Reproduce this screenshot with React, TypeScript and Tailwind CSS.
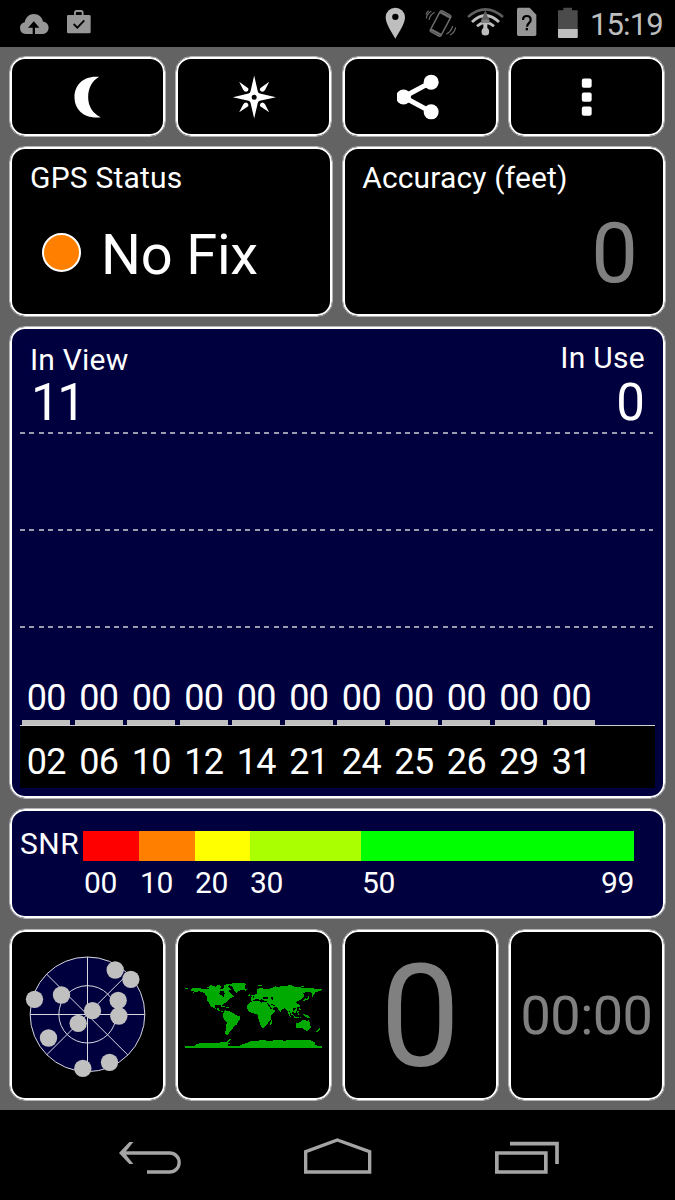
import type { ReactNode } from "react";

const satellites = ["02", "06", "10", "12", "14", "21", "24", "25", "26", "29", "31"];

const skyDots = [
  [316, 135], [363, 163], [325, 226], [327, 273], [248, 257], [205, 295],
  [155, 210], [74, 223], [116, 339], [219, 430], [299, 412],
];

// thin soft edge outside, 2px solid white line inside it
function Card({ className = "", children }: { className?: string; children: ReactNode }) {
  return (
    <div
      className={`min-w-0 overflow-hidden rounded-[16px] border border-[#b4b4b4] shadow-[inset_0_0_0_2px_#fff] ${className}`}
    >
      {children}
    </div>
  );
}

function StatusBar() {
  return (
    <header className="flex h-[47px] items-start bg-black pt-[7px] pl-[19px] text-[#bebebe]">
      <svg className="h-[33px] w-[30px]" viewBox="57 21 90 99" fill="#969696">
        <path d="M77 102a18 18 0 0 1-3-35.500C77 52 88 42 101.500 42c14 0 25 9 27.500 22.500A18.800 18.800 0 0 1 125 102h-20V83h13L101.500 64 84 83h14v19z" />
      </svg>
      <svg className="ml-[18px] h-[33px] w-[24px]" viewBox="201 21 72 99">
        <path d="M225 46v-8q0-5 5-5h13q5 0 5 5v8" fill="none" stroke="#969696" strokeWidth="5.500" />
        <rect x="201" y="45" width="71" height="55" rx="4" fill="#969696" />
        <path d="M221 72l11 11 21-22" fill="none" stroke="#000" strokeWidth="5.500" />
      </svg>
      <div className="ml-[294px] flex items-start">
        <svg className="h-[33px] w-[20px]" viewBox="150 21 60 99">
          <path fillRule="evenodd" d="M181 23a29 29 0 0 0-29 29c0 19 17 43 29 64 12-21 29-45 29-64a29 29 0 0 0-29-29zm0 18a9.500 9.500 0 1 1 0 19 9.500 9.500 0 0 1 0-19z" fill="#bebebe" />
        </svg>
        <svg className="ml-[20px] h-[33px] w-[31px]" viewBox="270 21 93 99" fill="none" stroke="#6b6b6b" strokeWidth="3.500">
          <g transform="rotate(28 317 70)">
            <rect x="299" y="35" width="36" height="71" rx="5" strokeWidth="4.500" />
            <path d="M299 41h36M299 100h36" strokeWidth="7" />
          </g>
          <path d="M289 34q-13 7-15 21M299 37q-14 7-17 23M345 105q14-7 17-23M334 102q14-6 19-24M281 32q-7 5-8 12" />
        </svg>
        <svg className="ml-[11px] h-[33px] w-[37px]" viewBox="395 21 111 99" fill="none">
          <path d="M398 51q52-46 105 0" stroke="#5f5f5f" strokeWidth="7.500" />
          <path d="M450 31l14 31h-28z" fill="#5f5f5f" />
          <path d="M410 66q40-39 81 0" stroke="#bebebe" strokeWidth="8" />
          <path d="M450 33l9 22h-18z" fill="#5f5f5f" />
          <path d="M425 79q25-23 51 0" stroke="#bebebe" strokeWidth="8" />
          <path d="M440 59h20l4 10h-28z" fill="#808080" />
          <path d="M444 72h12v16h-12z" fill="#bebebe" />
          <circle cx="450" cy="95" r="11.500" fill="#bebebe" />
        </svg>
        <svg className="ml-[13px] h-[33px] w-[20px]" viewBox="546 21 60 99">
          <path d="M551 23h33l20 21v59q0 5-5 5h-48q-5 0-5-5V28q0-5 5-5z" fill="#969696" />
          <path d="M564 60c0-16 23-16 23 0 0 9-11 10-11 20" fill="none" stroke="#000" strokeWidth="6.500" />
          <rect x="572" y="84" width="7" height="7" fill="#000" />
        </svg>
        <svg className="ml-[21px] h-[33px] w-[20px]" viewBox="669 21 60 99">
          <path d="M685 23h26v8h17v80q0 3-3 3h-53q-3 0-3-3V31h16z" fill="#4b4b4b" />
          <path d="M669 87h59v24q0 3-3 3h-53q-3 0-3-3z" fill="#bebebe" />
        </svg>
        <span className="ml-[12px] pt-[2px] text-[31px] leading-none tracking-[-0.900px]">15:19</span>
      </div>
    </header>
  );
}

function Toolbar() {
  return (
    <div className="mr-px grid h-[81px] grid-cols-4 gap-x-[9.330px]">
      <Card className="flex items-center justify-center bg-black">
        <svg className="size-[44px]" viewBox="196.500 223.500 132 132" fill="#fff">
          <path d="M296 229C250 224 222 252 222 290s30 66 79 60c-24-11-38-33-38-60s12-49 33-61z" />
        </svg>
      </Card>
      <Card className="flex items-center justify-center bg-black">
        <svg className="size-[44px]" viewBox="695.500 223.500 132 132" fill="#fff">
          <path fillRule="evenodd" d="M762 225l11 48 2 4 4 2 49 11-49 11-4 2-2 4-11 47-11-47-2-4-4-2-47-11 47-11 4-2 2-4zm0 57.500a7.500 7.500 0 1 0 0 15 7.500 7.500 0 0 0 0-15z" />
          <path d="M717 244l27 19q3 8-6 11-6 0-9-6zM807 244l-27 19q-3 8 6 11 6 0 9-6zM717 335l27-18q3-8-6-11-6 0-9 6zM807 335l-27-18q-3-8 6-11 6 0 9 6z" />
        </svg>
      </Card>
      <Card className="flex items-center justify-center bg-black">
        <svg className="size-[46px]" viewBox="187.500 220.500 138 138" fill="#fff">
          <path d="M290 245l-83 44.500 83 44.500" fill="none" stroke="#fff" strokeWidth="15" />
          <circle cx="290" cy="245" r="22.500" />
          <circle cx="207" cy="289.500" r="22.500" />
          <circle cx="290" cy="334" r="22.500" />
        </svg>
      </Card>
      <Card className="flex items-center justify-center bg-black">
        <svg className="size-[44px]" viewBox="687.500 223.500 132 132" fill="#fff">
          <rect x="741" y="234" width="29.500" height="28" rx="6" />
          <rect x="741" y="276" width="29.500" height="28" rx="6" />
          <rect x="741" y="318" width="29.500" height="28" rx="6" />
        </svg>
      </Card>
    </div>
  );
}

function DashedLine() {
  return (
    <div className="mr-[2px] h-[2px] shrink-0 bg-[repeating-linear-gradient(to_right,#9c9cb0_0px,#9c9cb0_5px,transparent_5px,transparent_9.390px)]" />
  );
}

function SignalPanel() {
  return (
    <Card className="mt-[9px] flex h-[473px] flex-col bg-[#00003f] pt-[2px] pr-[10px] pl-[10px]">
      <div className="flex h-[103px] shrink-0 justify-between px-[10px]">
        <div className="pt-[16px]">
          <div className="text-[30px] leading-none tracking-[0.200px]">In View</div>
          <div className="mt-[2px] pl-px text-[51px] leading-none tracking-[-2.500px]">11</div>
        </div>
        <div className="pt-[14px] text-right">
          <div className="text-[30px] leading-none tracking-[0.300px]">In Use</div>
          <div className="mt-[4px] text-[51px] leading-none">0</div>
        </div>
      </div>
      <DashedLine />
      <div className="h-[95px] shrink-0" />
      <DashedLine />
      <div className="h-[95px] shrink-0" />
      <DashedLine />
      <div className="flex h-[97px] shrink-0 gap-[4.530px] pl-[2.300px]">
        {satellites.map((id) => (
          <div key={id} className="flex w-[48px] flex-col items-center justify-end">
            <div className="mb-[4px] text-[36px] leading-none tracking-[-0.600px]">00</div>
            <div className="h-[5px] w-full bg-[#c0c0c0]" />
          </div>
        ))}
      </div>
      <div className="h-px shrink-0 bg-[#d0d0d0]" />
      <div className="flex h-[62px] shrink-0 gap-[4.530px] bg-black pt-[18px] pl-[2.300px]">
        {satellites.map((id) => (
          <div key={id} className="w-[48px] text-center text-[36px] leading-none tracking-[-0.600px]">
            {id}
          </div>
        ))}
      </div>
    </Card>
  );
}

function SnrLegend() {
  return (
    <Card className="mt-[9px] h-[111px] bg-[#00003f] pt-[22px] pl-[10px]">
      <div className="flex h-[30px]">
        <div className="-mt-[2px] w-[63px] text-[30px] leading-none tracking-[0.500px]">SNR</div>
        <div className="w-[56px] bg-[#ff0000]" />
        <div className="w-[56px] bg-[#ff8000]" />
        <div className="w-[55px] bg-[#ffff00]" />
        <div className="w-[111px] bg-[#aaff00]" />
        <div className="w-[273px] bg-[#00ff00]" />
      </div>
      <div className="mt-[7px] flex pl-[64px] text-[30px] leading-none tracking-[-0.300px]">
        <div className="w-[56px]">00</div>
        <div className="w-[55px]">10</div>
        <div className="w-[55px]">20</div>
        <div className="w-[112px]">30</div>
        <div className="w-[239px]">50</div>
        <div>99</div>
      </div>
    </Card>
  );
}

function SkyView() {
  return (
    <svg className="size-[134px] shrink-0" viewBox="33.500 69 402 402">
      <g fill="none" stroke="#d8d8e0" strokeWidth="3">
        <circle cx="233" cy="268" r="172" fill="#00003f" />
        <circle cx="233" cy="268" r="86" />
        <path d="M233 96v344M61 268.500h344M111 148l243 242M111 389l243-242" />
      </g>
      <g fill="#c0c0c0">
        {skyDots.map(([x, y]) => (
          <circle key={`${x}-${y}`} cx={x} cy={y} r="26" />
        ))}
      </g>
    </svg>
  );
}

function WorldMap() {
  return (
    <svg className="h-[67px] w-[137px] shrink-0" viewBox="31 50 411 201" fill="#00aa00" shapeRendering="crispEdges">
      {/* North and South America */}
      <path d="M31 67h8v5h-8zM48 70L62 68 85 70 105 70 120 73 132 69 136 76 134 86 142 90 146 96 150 86 147 76 158 73 166 82 173 88 178 93 166 100 160 105 152 112 144 117 141 125 137 119 124 118 120 124 125 131 131 127 133 134 142 138 147 139 143 141 132 136 122 130 108 123 102 112 97 104 96 92 88 82 74 78 62 80 50 85 58 79 49 76z" />
      <path d="M144 145L152 135 164 138 174 142 181 148 196 154 197 160 190 168 187 177 178 184 172 192 165 200 161 207 160 210 151 207 154 190 156 172 147 162z" />
      <path d="M95 66L110 61 122 64 132 58 141 64 134 70 144 71 150 62 159 63 169 72 160 77 148 78 131 74 110 73zM145 60l20-5 4 3-13 5zM104 62l5-4 4 2-5 4zM167 93l6 2-3 4-6-1zM140 121l13 3v2l-12-2zM154 126h9v3h-9z" />
      <path d="M160 57L180 53 210 53 214 57 210 64 211 71 202 75 192 76 185 82 178 74 174 64zM209 72l8-1 2 4-8 1z" />
      {/* Europe and Asia */}
      <path d="M230 107V98L240 96 236 90 245 86 249 80 246 73 256 67 268 70 276 72 288 69 300 67 312 64 330 62 345 60 355 63 372 66 395 68 424 70 441 71 440 76 426 80 414 84 408 84 412 80 396 80 386 84 390 93 380 102 370 108 364 109 366 114 374 118 372 124 362 128 354 130 356 137 350 142 344 138 346 148 350 156 344 152 338 136 330 128 322 132 318 140 313 136 308 126 300 126 294 132 284 136 278 126 274 116 262 112 250 108 240 104z" />
      <path d="M228 86l6 4 3 8-8 1 3-5zM221 88l5-1v5l-5 1zM250 61l8-3 8 1-8 4zM287 71l15-8 2 2-13 8zM340 58l12 1-3 3zM371 64l17-1v3zM412 82l7-2 1 5-7 10-2-2zM400 89l5 6-6 9-4-1 4-5zM389 100l7-2-3 7-10 3zM373 118l3 1-1 7-3-3z" />
      {/* Africa */}
      <path d="M222 114L234 108 252 106 259 113 284 114 292 130 302 136 290 150 288 162 281 170 276 180 268 187 261 187 255 172 250 158 248 146 236 144 224 140 218 131V121zM289 167l4-5-1 13-4 4-3-4z" />
      {/* Mediterranean, Black and Caspian seas, Red Sea, Persian Gulf */}
      <path d="M241 101L248 100 254 104 262 102 268 106 276 106 277 111 262 110 252 108 240 106zM266 96h14v4h-14zM290 94l5 2v9l-5-3zM277 113l4 1 11 17-4 1zM292 115l10 6-3 2-9-5z" fill="#000" />
      {/* Indonesia, Australia and New Zealand */}
      <path d="M341 131l14 17 7 5-3 1-10-7zM356 136l10-7-1 15-8-1zM368 137l7-1-4 4 2 8-4 1zM371 127l6 1 1 7-4-1zM386 147l14 2 7 9-9-1-11-5zM358 155l15 1v2h-15zM376 156l8-2-6 4z" />
      <path d="M365 174L377 170 383 164 393 165 397 170 401 163 407 175 408 186 402 193 390 194 383 189 366 189 364 184zM395 195h5l-2 4zM433 188l5 4-12 9-1-2z" />
      {/* Antarctica */}
      <path d="M31 243H61L65 236 80 233H122L140 231 154 230 163 221 168 222 160 232 168 234 155 239 170 243 195 241 212 234 228 228 257 225 290 226 310 224 330 226 348 224 370 223 394 224 412 226 422 232 420 239 441 243V249H31z" />
    </svg>
  );
}

function NavBar() {
  return (
    <nav className="flex h-[90px] gap-[123px] bg-black pt-[28px] pl-[119px]">
      <svg className="h-[36px] w-[62px]" viewBox="87 84 186 108" fill="none" stroke="#a5a5a5" strokeWidth="10">
        <path d="M98 129h141a28.500 28.500 0 0 1 0 57h-68" />
        <path d="M130 96h-12l-31 33 31 33h12l-26-33z" fill="#a5a5a5" stroke="none" />
      </svg>
      <svg className="h-[36px] w-[68px]" viewBox="642 84 204 108" fill="none" stroke="#a5a5a5" strokeWidth="10">
        <path d="M647 186v-61l95-35 97 35v61z" />
      </svg>
      <svg className="h-[36px] w-[65px]" viewBox="1215 84 195 108" fill="none" stroke="#a5a5a5" strokeWidth="11">
        <path d="M1220.500 129h147v57h-147zM1260 101h141v61" />
      </svg>
    </nav>
  );
}

export default function App() {
  return (
    <div className="h-[1200px] w-[675px] overflow-hidden bg-[#636363] font-[Roboto,sans-serif] text-white">
      <StatusBar />
      <main className="h-[1063px] px-[9px] pt-[9px]">
        <Toolbar />
        <div className="mt-[9px] grid h-[171px] grid-cols-2 gap-x-[9.330px]">
          <Card className="bg-black pt-[16px] pl-[20px]">
            <div className="text-[30px] leading-none tracking-[0.200px]">GPS Status</div>
            <div className="mt-[34px] flex items-start pl-[12px]">
              <div className="mt-[6px] size-[39px] rounded-full border-2 border-white bg-[#ff8000]" />
              <div className="ml-[20px] text-[56px] leading-none tracking-[-0.200px]">No Fix</div>
            </div>
          </Card>
          <Card className="bg-black pt-[16px] pr-[27px] pl-[19px]">
            <div className="text-[30px] leading-none tracking-[0.150px]">Accuracy (feet)</div>
            <div className="mt-[19px] text-right text-[83px] leading-none text-[#808080]">0</div>
          </Card>
        </div>
        <SignalPanel />
        <SnrLegend />
        <div className="mt-[10px] mr-px grid h-[172px] grid-cols-4 gap-x-[9.330px]">
          <Card className="flex items-center justify-center bg-black">
            <SkyView />
          </Card>
          <Card className="flex items-center justify-center bg-black">
            <WorldMap />
          </Card>
          <Card className="flex items-center justify-center bg-black pt-[5px] text-[143px] leading-none text-[#808080]">
            0
          </Card>
          <Card className="flex items-center justify-center bg-black pt-px text-[54px] leading-none tracking-[-0.500px] text-[#808080]">
            00:00
          </Card>
        </div>
      </main>
      <NavBar />
    </div>
  );
}
